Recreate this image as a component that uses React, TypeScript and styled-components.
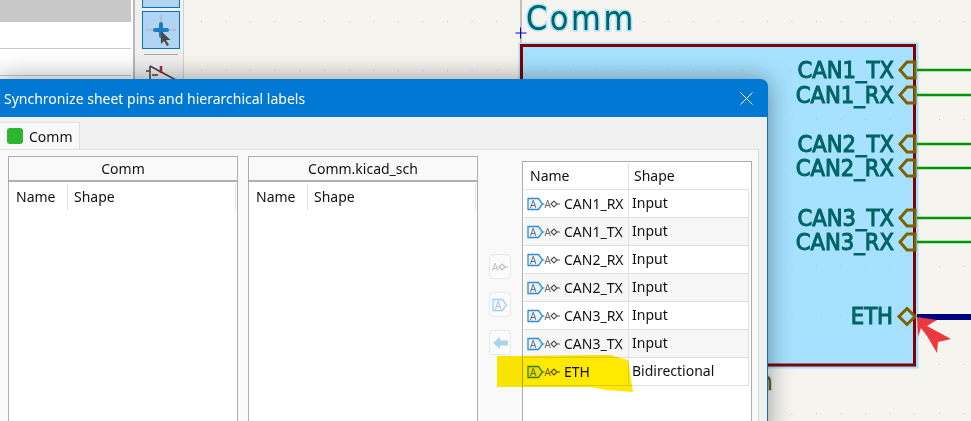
import { createGlobalStyle, styled } from 'styled-components';

const GlobalStyle = createGlobalStyle`
  html, body {
    margin: 0;
    padding: 0;
    background: #f5f4ef;
  }
  * {
    box-sizing: border-box;
  }
`;

const pins = [
  { name: 'CAN1_TX', y: 70 },
  { name: 'CAN1_RX', y: 95 },
  { name: 'CAN2_TX', y: 144 },
  { name: 'CAN2_RX', y: 168 },
  { name: 'CAN3_TX', y: 218 },
  { name: 'CAN3_RX', y: 242 },
];

const labels = [
  { name: 'CAN1_RX', shape: 'Input' },
  { name: 'CAN1_TX', shape: 'Input' },
  { name: 'CAN2_RX', shape: 'Input' },
  { name: 'CAN2_TX', shape: 'Input' },
  { name: 'CAN3_RX', shape: 'Input' },
  { name: 'CAN3_TX', shape: 'Input' },
  { name: 'ETH', shape: 'Bidirectional' },
];

const gridDots: [number, number][] = [];
for (let x = 201; x < 971; x += 24.6) {
  for (let y = 21; y < 421; y += 49) {
    gridDots.push([x, y]);
  }
}
const inSheet = ([x, y]: [number, number]) => x > 524 && x < 912 && y > 48 && y < 362;

const LabelIcon = () => (
  <svg width="34" height="14" viewBox="0 0 34 14">
    <path d="M1 1.500h10.500l4 5.500-4 5.500H1z" fill="#eaf4fb" stroke="#2f8fd0" strokeWidth="1.300" />
    <path d="M15.500 7h2" stroke="#2f8fd0" strokeWidth="1" />
    <text x="3" y="11" fontFamily="Noto Sans" fontSize="10" fill="#6a6a6a">A</text>
    <text x="17.500" y="11" fontFamily="Noto Sans" fontSize="10" fill="#6a6a6a">A</text>
    <path d="M24 7l3-3 3 3-3 3z" fill="none" stroke="#555" strokeWidth="1.200" />
    <path d="M30 7h3" stroke="#555" strokeWidth="1" />
  </svg>
);

const App = () => {
  return (
    <Page>
      <GlobalStyle />
      <LeftPanel>
        <PanelGrayRow />
        <PanelWhiteRow />
        <PanelFadeRow />
      </LeftPanel>
      <Toolbar>
        <ToolStub />
        <ToolButton>
          <svg width="36" height="36" viewBox="0 0 36 36">
            <path d="M18 3v28M3 18h30" stroke="#b5b0a5" strokeWidth="1" />
            <path d="M18 12v12M12 18h12" stroke="#1a7cc4" strokeWidth="4" strokeLinecap="round" />
            <path d="M18 19l0 13 3-3 3 5 2-1-3-5h4.500z" fill="#4a4a4a" />
          </svg>
        </ToolButton>
        <ToolDivider />
        <svg width="38" height="16" viewBox="0 0 38 16">
          <path d="M8 1l26 14M8 1v14M4 6h4M10 10h6" stroke="#444" strokeWidth="1.500" fill="none" />
          <path d="M19 1v7" stroke="#b4233c" strokeWidth="2.500" />
        </svg>
      </Toolbar>
      <Canvas>
        <svg width="787" height="421" viewBox="184 0 787 421">
          {gridDots.map(([x, y]) => (
            <rect key={`${x}-${y}`} x={x} y={y} width="1" height="1" fill="#c9c8c2" />
          ))}
          <path d="M521 0v45" stroke="#8c8c8c" strokeWidth="1" />
          <path d="M515.500 33h11M520.500 27.500v11" stroke="#0000e0" strokeWidth="1" />
          <SheetTitle x="526" y="30">Comm</SheetTitle>
          <rect x="521" y="45" width="395" height="321" fill="#a6e2ff" stroke="#a6e2ff" strokeWidth="5" />
          <rect x="521.500" y="45.500" width="393" height="319.500" fill="#a6e2ff" stroke="#840000" strokeWidth="3" />
          {gridDots.filter(inSheet).map(([x, y]) => (
            <rect key={`s${x}-${y}`} x={x} y={y} width="1" height="1" fill="#8fcdec" />
          ))}
          {pins.map(pin => (
            <g key={pin.name}>
              <path d={`M917 ${pin.y}h54`} stroke="#009600" strokeWidth="2.500" />
              <PinName x="894" y={pin.y + 8}>{pin.name}</PinName>
              <path
                d={`M915 ${pin.y - 8}h-8l-7 8 7 8h8z`}
                fill="none"
                stroke="#7f5f00"
                strokeWidth="3"
              />
            </g>
          ))}
          <path d="M917 317h54" stroke="#000082" strokeWidth="6" />
          <PinName x="893" y="324">ETH</PinName>
          <path d="M899 316.500l8-8 8 8-8 8z" fill="none" stroke="#7f5f00" strokeWidth="3" />
          <path d="M917 317L937 320 927 326 951 339 938 342 937 353 927 336 921 328 918 337z" fill="#ea3a3f" />
          <BrownName x="773" y="390">n</BrownName>
        </svg>
      </Canvas>
      <Dialog>
        <TitleBar>
          <TitleText>Synchronize sheet pins and hierarchical labels</TitleText>
          <CloseIcon width="13" height="13" viewBox="0 0 13 13">
            <path d="M0.500 0.500l12 12M12.500 0.500l-12 12" stroke="#fff" strokeWidth="1" />
          </CloseIcon>
        </TitleBar>
        <TabStrip>
          <Tab>
            <TabSwatch />
            Comm
          </Tab>
        </TabStrip>
        <Content>
          <SheetPanel>
            <PanelTitle>Comm</PanelTitle>
            <ColumnHeader>
              <NameHead>Name</NameHead>
              <ShapeHead>Shape</ShapeHead>
            </ColumnHeader>
          </SheetPanel>
          <SheetPanel>
            <PanelTitle>Comm.kicad_sch</PanelTitle>
            <ColumnHeader>
              <NameHead>Name</NameHead>
              <ShapeHead>Shape</ShapeHead>
            </ColumnHeader>
          </SheetPanel>
          <ActionColumn>
            <ActionButton>
              <svg width="16" height="12" viewBox="0 0 16 12">
                <text x="0" y="10" fontFamily="Noto Sans" fontSize="10" fill="#bdbdbd">A</text>
                <path d="M7 6l3-3 3 3-3 3z" fill="none" stroke="#bdbdbd" strokeWidth="1.200" />
                <path d="M13 6h3" stroke="#bdbdbd" strokeWidth="1" />
              </svg>
            </ActionButton>
            <ActionButton>
              <svg width="16" height="14" viewBox="0 0 16 14">
                <path d="M1 1.500h9.500l4 5.500-4 5.500H1z" fill="#f2f8fc" stroke="#a5cfec" strokeWidth="1.300" />
                <text x="3" y="11" fontFamily="Noto Sans" fontSize="10" fill="#bdbdbd">A</text>
              </svg>
            </ActionButton>
            <ActionButton>
              <svg width="15" height="14" viewBox="0 0 15 14">
                <path d="M0 7l7-6v3.500h8v5H7V13z" fill="#a9d2ee" />
              </svg>
            </ActionButton>
          </ActionColumn>
          <LabelList>
            <LabelHeader>
              <NameCell>Name</NameCell>
              <ShapeCell>Shape</ShapeCell>
            </LabelHeader>
            {labels.map((label, index) => (
              <LabelRow key={label.name} $alt={index % 2 === 1}>
                <NameCell>
                  <LabelIcon />
                  {label.name}
                </NameCell>
                <ShapeCell>{label.shape}</ShapeCell>
              </LabelRow>
            ))}
          </LabelList>
        </Content>
      </Dialog>
      <Highlight width="140" height="40" viewBox="495 354 140 40">
        <path d="M497 356L610 355 628 360 633 392 607 390 590 387 557 387 497 387z" fill="#ffe900" />
      </Highlight>
    </Page>
  );
};

const Page = styled.div`
  position: relative;
  display: flex;
  width: 971px;
  height: 421px;
  overflow: hidden;
  font-family: 'Noto Sans', 'Open Sans', sans-serif;
  font-size: 14px;
  color: #111;
`;
const LeftPanel = styled.div`
  width: 135px;
  flex-shrink: 0;
  background: #fff;
  border-right: 2px solid #b9b9b9;
  padding-right: 2px;
`;
const PanelGrayRow = styled.div`
  height: 22px;
  background: #c8c8c8;
`;
const PanelWhiteRow = styled.div`
  height: 27px;
  background: #fff;
  border-bottom: 1px solid #c8c8c8;
`;
const PanelFadeRow = styled.div`
  height: 27px;
  background: #fff;
  border-bottom: 1px solid #c8c8c8;
`;
const Toolbar = styled.div`
  display: flex;
  flex-direction: column;
  align-items: center;
  width: 49px;
  flex-shrink: 0;
  background: #f0f0f0;
  border-right: 1px solid #d0d0d0;
  padding-left: 4px;
`;
const ToolStub = styled.div`
  width: 38px;
  height: 8px;
  background: #b0d4f1;
  border: 1px solid #0a6fc2;
  border-top: none;
`;
const ToolButton = styled.div`
  display: flex;
  align-items: center;
  justify-content: center;
  width: 38px;
  height: 38px;
  margin-top: 3px;
  background: #b0d4f1;
  border: 1px solid #0a6fc2;
`;
const ToolDivider = styled.div`
  width: 34px;
  height: 1px;
  margin: 5px 0 10px;
  background: #a8a8a8;
`;
const Canvas = styled.div`
  flex: 1;
  background: #f5f4ef;
  svg {
    display: block;
  }
`;
const SheetTitle = styled.text`
  font-family: 'DejaVu Sans Condensed', 'DejaVu Sans', sans-serif;
  font-size: 34px;
  letter-spacing: 2.500px;
  fill: #006464;
  stroke: #a6e2ff;
  stroke-width: 3px;
  paint-order: stroke;
`;
const PinName = styled.text`
  font-family: 'DejaVu Sans Condensed', 'DejaVu Sans', sans-serif;
  font-size: 23.500px;
  text-anchor: end;
  fill: #006464;
  stroke: #006464;
  stroke-width: 1px;
`;
const BrownName = styled.text`
  font-family: 'DejaVu Sans', sans-serif;
  font-size: 24px;
  text-anchor: end;
  fill: #725a00;
  stroke: #a6e2ff;
  stroke-width: 2px;
  paint-order: stroke;
`;
const Dialog = styled.div`
  position: absolute;
  left: -1px;
  top: 79px;
  display: flex;
  flex-direction: column;
  width: 769px;
  height: 360px;
  background: #f0f0f0;
  border-right: 1px solid #1a70b8;
  border-radius: 0 8px 0 0;
  box-shadow: 0 0 26px rgba(0, 0, 0, 0.4);
`;
const TitleBar = styled.div`
  display: flex;
  align-items: center;
  justify-content: space-between;
  height: 38px;
  flex-shrink: 0;
  padding: 0 15px 0 5px;
  background: #0078d4;
  border-radius: 0 8px 0 0;
  margin-right: -1px;
`;
const TitleText = styled.span`
  color: #fff;
  font-size: 14px;
`;
const CloseIcon = styled.svg`
  display: block;
`;
const TabStrip = styled.div`
  display: flex;
  align-items: flex-end;
  height: 32px;
  flex-shrink: 0;
`;
const Tab = styled.div`
  display: flex;
  align-items: center;
  gap: 6px;
  width: 81px;
  height: 27px;
  padding-left: 8px;
  background: #f9f9f9;
  border-top: 1px solid #e4e4e4;
  border-right: 1px solid #e0e0e0;
`;
const TabSwatch = styled.span`
  width: 16px;
  height: 16px;
  border-radius: 3px;
  background: #2db52d;
`;
const Content = styled.div`
  display: flex;
  flex: 1;
  align-items: flex-start;
  width: 760px;
  padding: 6px 0 0 9px;
  background: #f9f9f9;
  border-top: 1px solid #e0e0e0;
  border-right: 1px solid #dcdcdc;
`;
const SheetPanel = styled.div`
  display: flex;
  flex-direction: column;
  flex-shrink: 0;
  width: 230px;
  height: 300px;
  margin-right: 10px;
  background: #fff;
  border: 1px solid #acacac;
`;
const PanelTitle = styled.div`
  height: 25px;
  line-height: 23px;
  text-align: center;
  background: #f9f9f9;
  border-bottom: 2px solid #b0b0b0;
`;
const ColumnHeader = styled.div`
  display: flex;
  align-items: center;
  height: 29px;
  padding-right: 1px;
`;
const NameHead = styled.div`
  width: 59px;
  padding-left: 7px;
  border-right: 1px solid #e4e4e4;
  line-height: 26px;
`;
const ShapeHead = styled.div`
  flex: 1;
  padding-left: 6px;
  border-right: 1px solid #e4e4e4;
  line-height: 26px;
`;
const ActionColumn = styled.div`
  display: flex;
  flex-direction: column;
  flex-shrink: 0;
  gap: 13px;
  width: 34px;
  padding: 98px 0 0 1px;
`;
const ActionButton = styled.div`
  display: flex;
  align-items: center;
  justify-content: center;
  width: 22px;
  height: 25px;
  background: #fbfbfb;
  border: 1px solid #e8e8e8;
  border-radius: 4px;
`;
const LabelList = styled.div`
  flex-shrink: 0;
  width: 230px;
  height: 300px;
  margin-top: 5px;
  padding: 0 2px 0 1px;
  background: #fff;
  border: 1px solid #acacac;
`;
const LabelHeader = styled.div`
  display: grid;
  grid-template-columns: 105px 122px;
  height: 28px;
  padding-top: 1px;
  border-bottom: 1px solid #e0e0e0;
  line-height: 26px;
`;
const LabelRow = styled.div<{ $alt: boolean }>`
  display: grid;
  grid-template-columns: 105px 122px;
  height: 28px;
  border-bottom: 1px solid #e0e0e0;
  border-right: 1px solid #e0e0e0;
  line-height: 26px;
  background: ${({ $alt }) => ($alt ? '#f6f6f6' : '#fff')};
`;
const NameCell = styled.div`
  display: flex;
  align-items: center;
  gap: 3px;
  padding-left: 3px;
  border-right: 1px solid #e0e0e0;
  white-space: nowrap;
  overflow: hidden;
  svg {
    flex-shrink: 0;
  }
  ${LabelHeader} & {
    padding-left: 6px;
  }
`;
const ShapeCell = styled.div`
  padding-left: 3px;
  ${LabelHeader} & {
    padding-left: 5px;
  }
`;
const Highlight = styled.svg`
  position: absolute;
  left: 495px;
  top: 354px;
  mix-blend-mode: multiply;
`;

export default App;
